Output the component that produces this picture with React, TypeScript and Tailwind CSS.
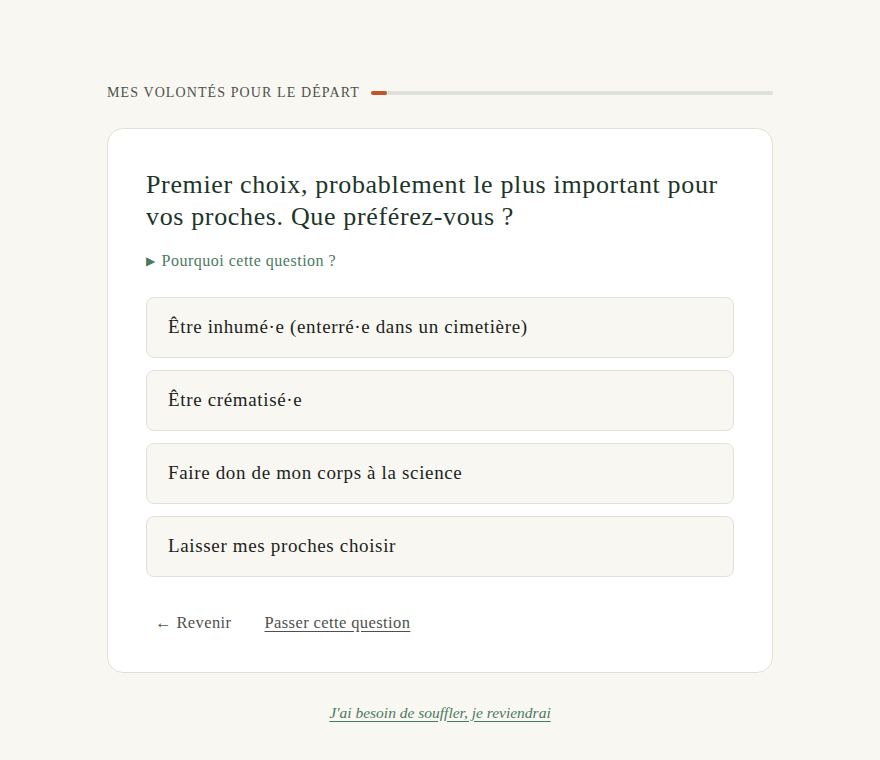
const options = [
  'Être inhumé·e (enterré·e dans un cimetière)',
  'Être crématisé·e',
  'Faire don de mon corps à la science',
  'Laisser mes proches choisir',
];

export default function App() {
  return (
    <div className="min-h-screen bg-[#f8f7f2] font-['Liberation_Serif',serif] text-[#1f2a24]">
      <div className="mx-auto w-[666px] pt-[86px]">
        <div className="flex items-center gap-[11px]">
          <span className="text-[14px] tracking-[1.1px] text-[#4d524c] uppercase leading-none">Mes volontés pour le départ</span>
          <div className="h-[4px] flex-1 rounded-full bg-[#dde1da]">
            <div className="h-[4px] w-[16px] rounded-full bg-[#c4532a]" />
          </div>
        </div>

        <div className="mt-[28px] rounded-[16px] border border-[#e0e2da] bg-white px-[38px] pt-[40px] pb-[36px]">
          <h1 className="text-[26px] leading-[32px] tracking-[0.65px] text-[#1d3528]">
            Premier choix, probablement le plus important pour vos proches. Que préférez-vous ?
          </h1>
          <div className="mt-[16px] flex items-center gap-[6px] text-[16px] tracking-[0.5px] text-[#4a7a5e]">
            <span className="text-[12px]">▶</span>
            <span>Pourquoi cette question ?</span>
          </div>

          <div className="mt-[24px] flex flex-col gap-[12px]">
            {options.map((o) => (
              <button
                key={o}
                className="h-[61px] rounded-[8px] border border-[#e0e2da] bg-[#f8f7f2] px-[21px] text-left text-[19px] tracking-[0.65px] text-[#1c1f1c]"
              >
                {o}
              </button>
            ))}
          </div>

          <div className="mt-[34px] flex items-center gap-[33px] pl-[9px] text-[16.5px] tracking-[0.4px] text-[#4d524c]">
            <span>← Revenir</span>
            <span className="underline underline-offset-[3px]">Passer cette question</span>
          </div>
        </div>

        <div className="mt-[28px] text-center">
          <span className="text-[15.5px] italic text-[#4a7a5e] underline underline-offset-[3px]">
            J'ai besoin de souffler, je reviendrai
          </span>
        </div>
      </div>
    </div>
  );
}
